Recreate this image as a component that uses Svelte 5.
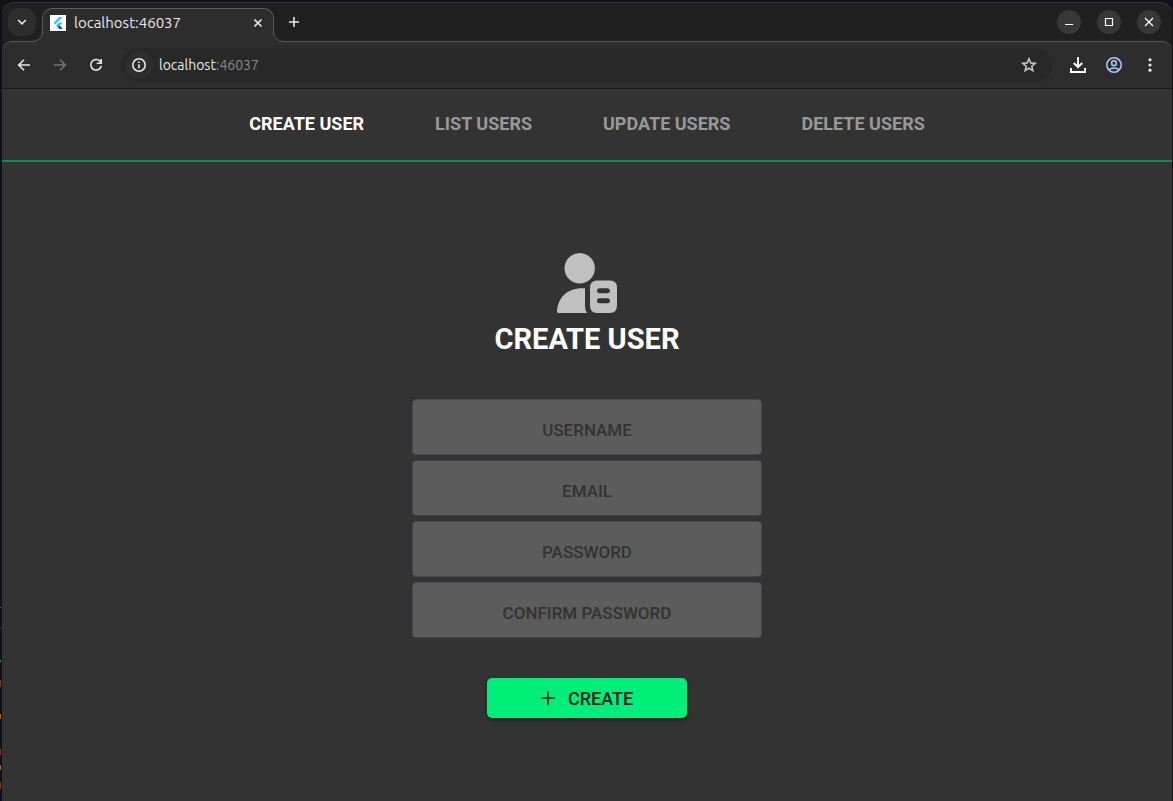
<script>
  const tabs = ['CREATE USER', 'LIST USERS', 'UPDATE USERS', 'DELETE USERS'];
  const fields = [
    { id: 'username', type: 'text', label: 'USERNAME' },
    { id: 'email', type: 'email', label: 'EMAIL' },
    { id: 'password', type: 'password', label: 'PASSWORD' },
    { id: 'confirm', type: 'password', label: 'CONFIRM PASSWORD' }
  ];
  let active = $state(0);
</script>

<div class="desktop">
  <div class="window">
    <header class="strip">
      <button class="search" aria-label="Search tabs">
        <svg width="12" height="12" viewBox="0 0 12 12"><path d="M2.2 4 6 7.8 9.8 4" class="line w2" /></svg>
      </button>
      <div class="tab">
        <svg class="flare left" width="11" height="11" viewBox="0 0 11 11"><path d="M11 0A10.5 10.5 0 0 1 0 10.5V11H11Z" fill="#2d2d2d" /><path d="M10.5 0A10 10 0 0 1 0 10.5" fill="none" stroke="#5a5a5a" /></svg>
        <svg class="favicon" width="16" height="16" viewBox="0 0 16 16">
          <path d="M0 0H16V16H0Z" fill="#fff" />
          <path d="M9.2 2H12.7L5.3 9.4 3.5 7.7Z" fill="#42c5f5" />
          <path d="M9.2 7.5H12.7L9.6 10.6 12.7 13.8H9.2L6 10.6Z" fill="#35b8f1" />
          <path d="M7.8 12.3 9.6 10.6 12.7 13.8H9.2Z" fill="#124d93" />
        </svg>
        <span class="title">localhost:46037</span>
        <button class="bare close" aria-label="Close tab">
          <svg width="10" height="10" viewBox="0 0 10 10"><path d="M1.5 1.5 8.5 8.5M8.5 1.5 1.5 8.5" class="line w2" /></svg>
        </button>
        <svg class="flare right" width="11" height="11" viewBox="0 0 11 11"><path d="M0 0A10.5 10.5 0 0 0 11 10.5V11H0Z" fill="#2d2d2d" /><path d="M.5 0A10 10 0 0 0 11 10.5" fill="none" stroke="#5a5a5a" /></svg>
      </div>
      <button class="bare plus" aria-label="New tab">
        <svg width="12" height="12" viewBox="0 0 12 12"><path d="M6 1V11M1 6H11" class="line w2" /></svg>
      </button>
      <div class="controls">
        <button aria-label="Minimize"><svg width="10" height="10" viewBox="0 0 10 10"><path d="M1 7.5H9" class="line w1" /></svg></button>
        <button aria-label="Maximize"><svg width="10" height="10" viewBox="0 0 10 10"><path d="M1.5 1.5H8.5V8.5H1.5Z" class="line w1" /></svg></button>
        <button aria-label="Close"><svg width="10" height="10" viewBox="0 0 10 10"><path d="M1 1 9 9M9 1 1 9" class="line w1" /></svg></button>
      </div>
    </header>

    <div class="toolbar">
      <button class="bare tool" aria-label="Back"><svg width="16" height="16" viewBox="0 0 16 16"><path d="M14 8H3M8 2.7 2.7 8 8 13.3" class="line w2" /></svg></button>
      <button class="bare tool dim" aria-label="Forward"><svg width="16" height="16" viewBox="0 0 16 16"><path d="M2 8H13M8 2.7 13.3 8 8 13.3" class="line w2" /></svg></button>
      <button class="bare tool" aria-label="Reload"><svg width="16" height="16" viewBox="0 0 16 16"><path d="M12.5 4.8A5.3 5.3 0 1 0 13.3 8.9M13.2 2V6.3H8.8" class="line w2" /></svg></button>
      <div class="address">
        <button class="info" aria-label="View site information"><svg width="16" height="16" viewBox="0 0 16 16"><circle cx="8" cy="8" r="6.2" class="line w2" /><path d="M8 7.2V11.3M8 4.5V6" class="line w2" /></svg></button>
        <span class="url">localhost<span class="port">:46037</span></span>
        <button class="bare star" aria-label="Bookmark"><svg width="18" height="18" viewBox="0 0 18 18"><path d="M9 2.8 10.7 6.9 15.2 7.3 11.8 10.2 12.8 14.6 9 12.2 5.2 14.6 6.2 10.2 2.8 7.3 7.3 6.9Z" class="line w2" /></svg></button>
      </div>
      <button class="bare tool download" aria-label="Downloads"><svg width="18" height="18" viewBox="0 0 18 18"><path d="M9 1V11M4.8 7 9 11.2 13.2 7M2 12V16H16V12" class="line w3" /></svg></button>
      <button class="bare tool account" aria-label="Account"><svg width="18" height="18" viewBox="0 0 18 18"><circle cx="9" cy="9" r="7.2" class="line w2" /><circle cx="9" cy="7.2" r="2.4" class="line w2" /><path d="M3.8 14C6.5 11.3 11.5 11.3 14.2 14" class="line w2" /></svg></button>
      <button class="bare tool" aria-label="Menu"><svg width="16" height="16" viewBox="0 0 16 16"><circle cx="8" cy="2.8" r="1.6" /><circle cx="8" cy="8" r="1.6" /><circle cx="8" cy="13.2" r="1.6" /></svg></button>
    </div>

    <nav>
      {#each tabs as tab, i}
        <button class:active={active === i} onclick={() => (active = i)}>{tab}</button>
      {/each}
    </nav>

    <main>
      <svg class="person" width="60" height="60" viewBox="0 0 60 60">
        <circle cx="22.7" cy="15.3" r="15.2" />
        <path d="M28 35.3V53Q28 57 30 60H1.5Q0 60 0 58.2C1 44 11 34 28 35.3Z" />
        <path fill-rule="evenodd" d="M40 27.5H53Q60 27.5 60 35V52Q60 60 53 60H40Q33 60 33 52V35Q33 27.5 40 27.5ZM42.5 35.2A2.5 2.5 0 0 0 42.5 40.2H50.5A2.5 2.5 0 0 0 50.5 35.2ZM42.5 45.2A2.5 2.5 0 0 0 42.5 50.2H50.5A2.5 2.5 0 0 0 50.5 45.2Z" />
      </svg>
      <h1>CREATE USER</h1>
      <form onsubmit={(e) => e.preventDefault()}>
        {#each fields as field}
          <input id={field.id} type={field.type} placeholder={field.label} aria-label={field.label} />
        {/each}
        <button class="create"><svg width="14" height="14" viewBox="0 0 14 14"><path d="M7 0V14M0 7H14" class="line w2" /></svg>CREATE</button>
      </form>
    </main>
  </div>
</div>

<style>
  :global(body) { margin: 0; background: #11101b; }
  * { box-sizing: border-box; }
  button { border: 0; padding: 0; font: inherit; color: inherit; cursor: pointer; }
  svg { display: block; flex: none; fill: currentColor; }
  .line { fill: none; stroke: currentColor; }
  .w1 { stroke-width: 1.2; }
  .w2 { stroke-width: 1.6; }
  .w3 { stroke-width: 2; }

  .desktop {
    min-height: 100vh;
    padding: 2px 1px 0 2px;
    display: flex;
    background:
      linear-gradient(#0000 607px, #8c5580 607px 608px, #0000 608px 628px, #555 628px 629px, #0000 629px 660px, #00a54a 660px 662px, #0000 662px 680px, #7a3b1b 680px 687px, #0000 687px 714px, #a8682e 714px 719px, #0000 719px 749px, #7a3b1b 749px 755px, #0000 755px 765px, #a8682e 765px 770px, #0000 770px 782px, #7a3b1b 782px 789px, #0000 789px) 0 0 / 1px 100% no-repeat,
      #11101b;
  }
  .window {
    flex: 1;
    display: flex;
    flex-direction: column;
    min-width: 0;
    overflow: hidden;
    border-radius: 12px 12px 0 0;
    background: #202020;
    color: #e8e8e8;
    font-family: Ubuntu, "Noto Sans", sans-serif;
    font-size: 14px;
    box-shadow: inset 0 1px #343434;
  }
  .strip { display: flex; align-items: center; height: 39px; padding: 0 11px 0 6px; }
  .search {
    display: grid; place-items: center; width: 28px; height: 28px;
    border-radius: 10px; background: #2d2d2d;
  }
  .tab {
    position: relative; z-index: 1; align-self: flex-end;
    display: flex; align-items: center; gap: 8px;
    width: 232px; height: 34px; margin: 0 14px -1px 6px; padding: 0 7px 6px;
    border: 1px solid #5a5a5a; border-bottom: 0; border-radius: 10px 10px 0 0;
    background: #2d2d2d;
  }
  .flare { position: absolute; bottom: 0; }
  .flare.left { left: -11px; }
  .flare.right { right: -11px; }
  .title { flex: 1; font-size: 15px; line-height: 16px; }
  .bare { display: grid; place-items: center; background: none; }
  .close { width: 16px; height: 16px; }
  .controls { display: flex; gap: 16px; margin-left: auto; }
  .controls button {
    display: grid; place-items: center; width: 24px; height: 24px;
    border-radius: 50%; background: #383838; color: #fff;
  }

  .toolbar {
    display: flex; align-items: center; gap: 16px;
    height: 48px; padding: 0 12px;
    border-top: 1px solid #5a5a5a; border-bottom: 1px solid #1c1c1c;
    border-radius: 10px 10px 0 0; background: #2d2d2d;
  }
  .tool { width: 20px; height: 20px; }
  .dim { color: #757575; }
  .address {
    flex: 1; display: flex; align-items: center; gap: 6px;
    height: 34px; padding: 0 14px 0 3px;
    border-radius: 17px; background: #282828;
  }
  .info {
    display: grid; place-items: center; width: 28px; height: 28px;
    border-radius: 50%; background: #2e2e2e;
  }
  .url { flex: 1; }
  .port { color: #8a8a8a; }
  .star { color: #c4c4c4; }
  .download { color: #fff; }
  .account { color: #a8c7fa; }

  nav {
    display: flex; justify-content: center; gap: 71px;
    height: 73px; padding-bottom: 2px;
    border-bottom: 2px solid #068f57; background: #333;
    font-family: Roboto, sans-serif; font-size: 18px; font-weight: 700;
  }
  nav button { background: none; color: #999; white-space: nowrap; }
  nav .active { color: #fff; }

  main {
    flex: 1; display: flex; flex-direction: column; align-items: center;
    padding: 91px 16px 40px; background: #333;
    font-family: Roboto, sans-serif;
  }
  .person { color: #c0c0c0; overflow: visible; }
  h1 { margin: 8px 0 41px; color: #fff; font-size: 29px; line-height: 37px; font-weight: 700; }
  form { display: flex; flex-direction: column; align-items: center; gap: 5px; width: 100%; max-width: 350px; }
  input {
    width: 100%; height: 56px; padding: 5px 12px 0;
    border: 1px solid #49454f; border-radius: 4px; background: #5c5c5c;
    color: #fff; font: 500 17px Roboto, sans-serif; text-align: center;
  }
  input::placeholder { color: #333; opacity: 1; }
  .create {
    display: flex; align-items: center; justify-content: center; gap: 13px;
    width: 200px; height: 40px; margin-top: 35px;
    border-radius: 5px; background: #00ef7b; color: #06241a;
    font-size: 18px; font-weight: 500;
    box-shadow: 0 2px 4px #0006;
  }
</style>
